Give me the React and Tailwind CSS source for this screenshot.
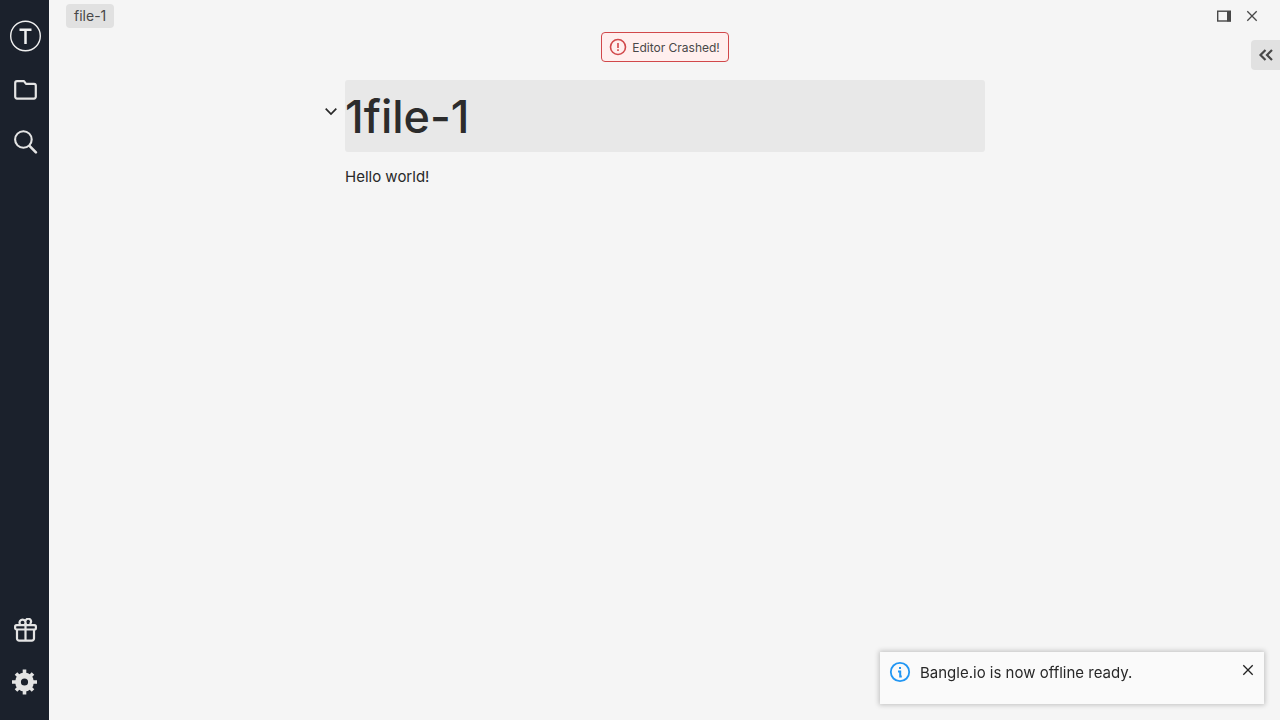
import React from 'react';

const navButton = 'flex h-[52px] w-full items-center justify-center pl-0.5 text-[#e4e4e4]';

function Sidebar() {
  return (
    <nav aria-label="Main" className="flex w-[50px] shrink-0 flex-col border-r border-[#f8f8f8] bg-[#1b212c] pt-2 pb-3">
      <a href="#home" aria-label="Home" className="flex h-14 w-full items-center justify-center pl-0.5">
        <svg className="h-8 w-8" viewBox="0 0 32 32" fill="none" stroke="#f0f0f0">
          <circle cx="15.500" cy="16" r="14.800" strokeWidth="1.400" />
          <path d="M9.500 9.800h12M15.500 9.800V24" strokeWidth="2.500" />
        </svg>
      </a>
      <button type="button" aria-label="Note browser" className={navButton}>
        <svg className="h-6 w-6" viewBox="0.5 0 24 24" fill="none" stroke="currentColor" strokeWidth="2.200" strokeLinejoin="round">
          <path d="M1.700 5a1.800 1.800 0 0 1 1.800-1.800h7l2 2.600h8a1.800 1.800 0 0 1 1.800 1.800v11.200a1.800 1.800 0 0 1-1.800 1.800H3.500a1.800 1.800 0 0 1-1.800-1.800z" />
        </svg>
      </button>
      <button type="button" aria-label="Search notes" className={navButton}>
        <svg className="h-6 w-6" viewBox="0.5 0 24 24" fill="none" stroke="currentColor" strokeLinecap="round">
          <circle cx="9.900" cy="9.500" r="8.300" strokeWidth="2.100" />
          <path d="M16 15.900l6.400 6.400" strokeWidth="2.600" />
        </svg>
      </button>
      <button type="button" aria-label="What's new" className={navButton + ' mt-auto'}>
        <svg className="h-6 w-6" viewBox="0.5 0 24 24" fill="none" stroke="currentColor" strokeWidth="2.200" strokeLinejoin="round">
          <rect x="1.600" y="7.200" width="20.800" height="4.300" rx="1.500" />
          <path d="M3.500 11.500v9a2.200 2.200 0 0 0 2.200 2.200h12.600a2.200 2.200 0 0 0 2.200-2.200v-9M12 5v17.700" />
          <path d="M12 7V4.400a3 3 0 1 0-5 2.500M12 3.300a2.800 2.800 0 1 1 5 1.900V7" />
        </svg>
      </button>
      <button type="button" aria-label="Settings" className="flex h-[52px] w-full items-center justify-center pr-px text-[#e4e4e4]">
        <svg className="h-[26px] w-[26px]" viewBox="-13 -13 26 26">
          <g stroke="currentColor" strokeWidth="3.600" strokeLinejoin="round">
            <path d="M.5-6v-6.500M.5 6v6.500M-5.500 0H-12M6.500 0H13M-4-4.500l-4-4M5-4.500l4-4M-4 4.500l-4 4M5 4.500l4 4" />
          </g>
          <circle cx=".5" r="6.500" fill="none" stroke="currentColor" strokeWidth="5.800" />
        </svg>
      </button>
    </nav>
  );
}

function CloseIcon() {
  return (
    <svg className="h-3 w-3" viewBox="0 0 12 12" fill="none" stroke="currentColor" strokeWidth="1.300">
      <path d="M1.300 1.300l9.400 9.400M10.700 1.300l-9.400 9.400" />
    </svg>
  );
}

function TabBar() {
  return (
    <header className="flex h-8 items-center justify-between pr-[18px] pl-4">
      <a href="#file-1" className="flex h-6 items-center rounded-[4px] bg-[#e1e1e1] px-2 text-sm text-[#484848]">
        file-1
      </a>
      <div className="flex text-[#484848]">
        <button type="button" aria-label="Split screen" className="flex h-7 w-7 items-center justify-center">
          <svg className="h-3 w-4" viewBox="0 0 16 12">
            <rect x="1.700" y="1.200" width="12.600" height="9.800" fill="none" stroke="currentColor" strokeWidth="1.400" />
            <path d="M11 1h3.800v10.500H11z" fill="currentColor" />
          </svg>
        </button>
        <button type="button" aria-label="Close editor" className="flex h-7 w-6 items-center justify-center pl-1">
          <CloseIcon />
        </button>
      </div>
    </header>
  );
}

function Toast() {
  return (
    <div role="status" className="fixed right-4 bottom-4 flex min-h-[52px] w-96 items-start bg-[#fafafa] p-2 shadow-[0_0_5px_1px_rgba(0,0,0,0.22)]">
      <svg className="h-6 w-6 text-[#2196f3]" viewBox="0 0 24 24" fill="none" stroke="currentColor" strokeWidth="2">
        <circle cx="12" cy="12" r="9.200" strokeWidth="1.800" />
        <path d="M10 11.500h2.200v5h1.600M11 8h2" />
      </svg>
      <p className="ml-2 flex-1 text-[15px]/[26px] text-[#282828]">Bangle.io is now offline ready.</p>
      <button type="button" aria-label="Dismiss" className="flex h-5 w-4 items-center justify-center text-[#222222]">
        <CloseIcon />
      </button>
    </div>
  );
}

export default function App() {
  return (
    <div className="flex min-h-screen bg-[#f5f5f5] font-['Inter',sans-serif] text-[#2c2c2c]">
      <Sidebar />
      <main className="relative min-w-0 flex-1">
        <TabBar />
        <button type="button" aria-label="Show side panel" className="absolute top-10 right-0 flex h-[30px] w-[29px] items-center justify-center rounded-l-[4px] bg-[#e1e1e1] text-[#484848]">
          <svg className="h-4 w-4" viewBox="0 0 16 16" fill="none" stroke="currentColor" strokeWidth="2.200">
            <path d="M7.500 3L2.500 8l5 5M14 3L9 8l5 5" />
          </svg>
        </button>
        <div className="flex justify-center">
          <button type="button" className="flex h-[30px] items-center gap-[5px] rounded-[4px] border border-[#d1484a] bg-[#ffefee] pt-px pr-2 pl-[7px] text-xs text-[#484848]">
            <svg className="mb-px h-[18px] w-[18px] text-[#d1484a]" viewBox="0 0 18 18" fill="none" stroke="currentColor">
              <circle cx="9" cy="9" r="7.500" strokeWidth="1.600" />
              <path d="M9 5v5M9 11.300v1.700" strokeWidth="1.600" />
            </svg>
            Editor Crashed!
          </button>
        </div>
        <article className="mx-auto mt-[18px] max-w-[640px]">
          <div className="relative">
            <button type="button" aria-label="Collapse heading" className="absolute top-6 -left-[22px] flex h-4 w-4 items-center justify-center text-[#282828]">
              <svg className="h-4 w-4" viewBox="0 0 16 16" fill="none" stroke="currentColor" strokeWidth="1.700">
                <path d="M2.700 4.700L8 10l5.300-5.300" />
              </svg>
            </button>
            <h1 className="rounded-[3px] bg-[#e8e8e8] pt-0.5 text-[45px]/[70px] font-medium">1file-1</h1>
          </div>
          <p className="mt-3 text-[15px]/[26px] text-[#282828]">Hello world!</p>
        </article>
      </main>
      <Toast />
    </div>
  );
}
